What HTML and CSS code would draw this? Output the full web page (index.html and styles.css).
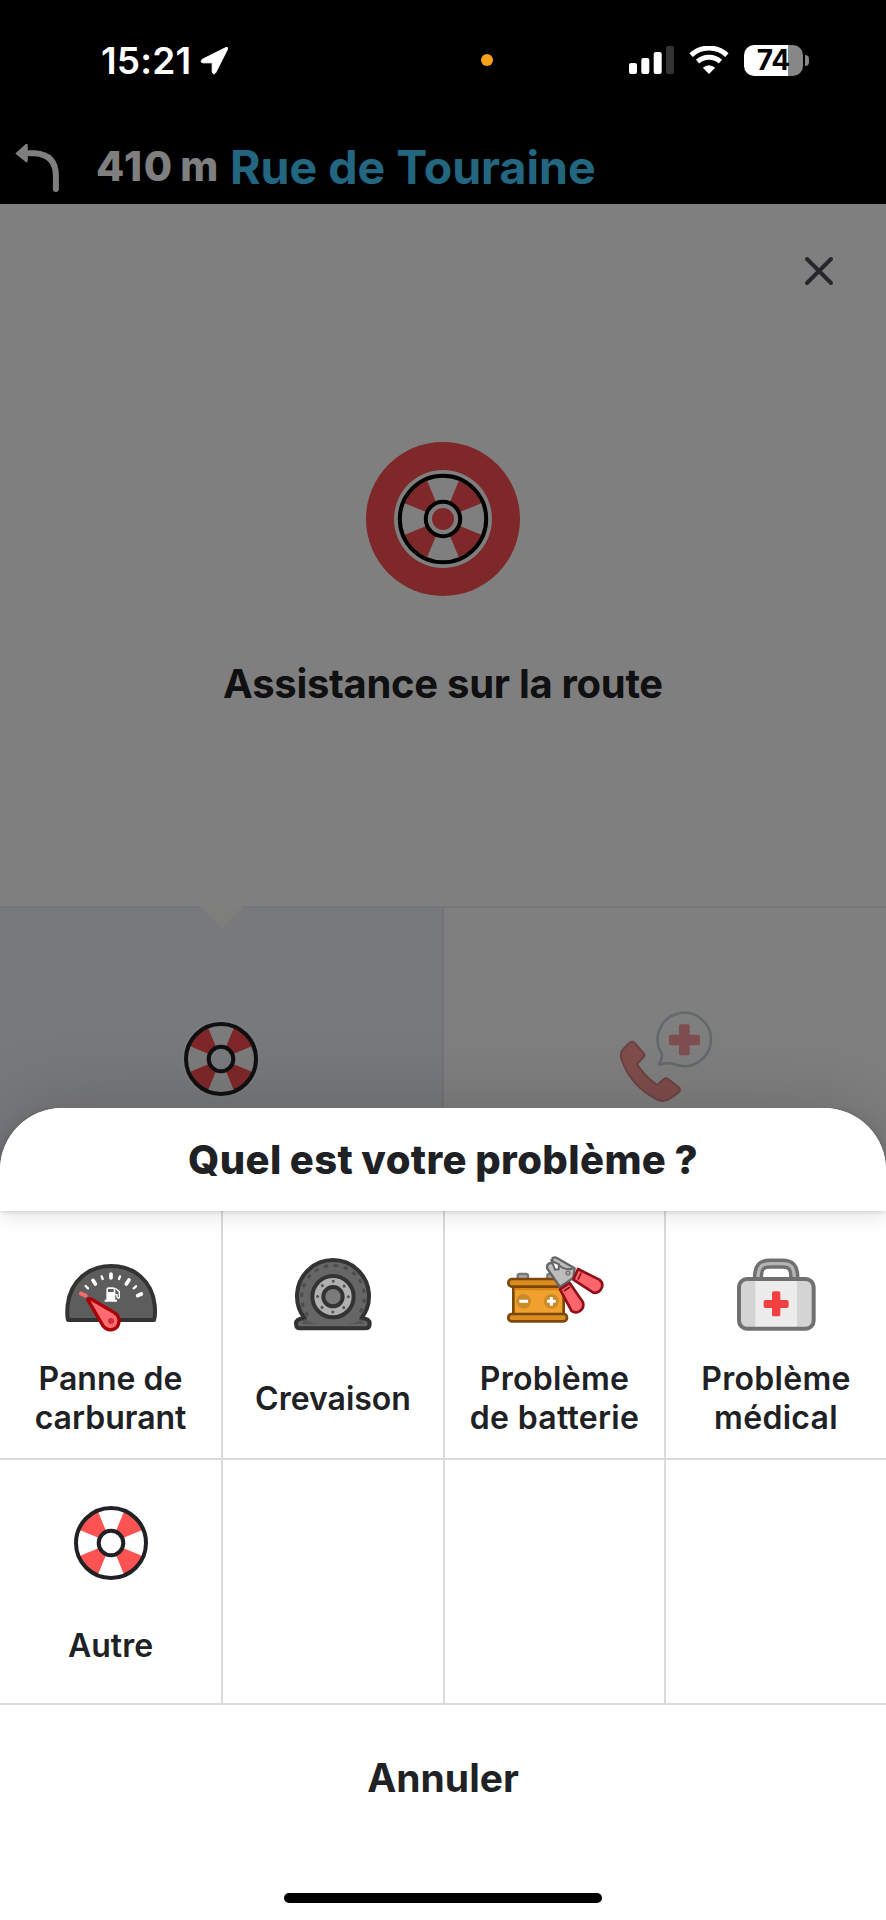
FILE: index.html
```html
<!DOCTYPE html>
<html lang="fr">
<head>
    <meta charset="UTF-8">
    <meta name="viewport" content="width=device-width, initial-scale=1.0">
    <title>Assistance sur la route</title>
    <link rel="stylesheet" href="styles.css">
</head>
<body>
    <div class="screen">
        <div class="navigation">
            <svg class="turn-icon" viewBox="0 0 150 160">
                <path d="M33 34H62Q126 38 126 102V142" fill="none" stroke="#fff" stroke-width="18" stroke-linecap="round"/>
                <path d="M5 33L35 6Q41 3 41 10V56Q41 63 35 60L5 36Q2 34 5 33Z" fill="#fff"/>
            </svg>
            <span class="distance">410 m</span>
            <span class="street">Rue de Touraine</span>
        </div>

        <div class="hero">
            <svg class="close" viewBox="0 0 30 30">
                <path d="M3 3L27 27M27 3L3 27" stroke="#4c4f55" stroke-width="4" stroke-linecap="round"/>
            </svg>
            <svg class="hero-icon" viewBox="0 0 154 154">
                <circle cx="77" cy="77" r="77" fill="#fc5052"/>
                <circle cx="77" cy="77" r="49" fill="#fff"/>
                <circle cx="77" cy="77" r="29.5" fill="none" stroke="#fc5052" stroke-width="24" pathLength="8" stroke-dasharray="1 1" stroke-dashoffset="-0.5"/>
                <circle cx="77" cy="77" r="43.2" fill="none" stroke="#000" stroke-width="4"/>
                <circle cx="77" cy="77" r="17.2" fill="#fff" stroke="#000" stroke-width="4"/>
                <circle cx="77" cy="77" r="11" fill="#fc5052"/>
            </svg>
            <h1>Assistance sur la route</h1>
        </div>

        <div class="tabs">
            <div class="tab active">
                <svg class="tab-arrow" viewBox="0 0 44 24">
                    <path d="M0 0L22 22L44 0Z" fill="#fcfcfa"/>
                </svg>
                <svg class="tab-icon" viewBox="-49 -49 98 95">
                    <circle r="39" fill="#fff" opacity="0.5"/>
                    <circle r="35" fill="#f8f8f8"/>
                    <circle r="23.5" fill="none" stroke="#fc5052" stroke-width="21" pathLength="8" stroke-dasharray="1 1" stroke-dashoffset="-0.5"/>
                    <circle r="35" fill="none" stroke="#202124" stroke-width="4"/>
                    <circle r="12.3" fill="#f2f4f7" stroke="#202124" stroke-width="4"/>
                </svg>
            </div>
            <div class="tab">
                <svg class="tab-icon" viewBox="518 360 294 285">
                    <path d="M656 492A80 80 0 1 1 692 522Q680 517 647 523Q657 506 656 492Z" fill="none" stroke="#c8d2d6" stroke-width="8" stroke-linejoin="round"/>
                    <path d="M712 403h22q5 0 5 5v26h26q5 0 5 5v22q0 5-5 5h-26v25q0 5-5 5h-22q-5 0-5-5v-25h-25q-5 0-5-5v-22q0-5 5-5h25v-26q0-5 5-5Z" fill="#ff9da0"/>
                    <path d="M574 459Q567 452 558 459L537 480Q530 490 534 507Q560 580 620 616Q640 632 660 633Q675 633 706 607Q714 599 706 592L674 567Q668 562 662 567L641 585Q600 555 581 522L600 502Q606 496 601 490Z" fill="#ff9b98" stroke="#da8584" stroke-width="6" stroke-linejoin="round"/>
                </svg>
            </div>
        </div>

        <div class="overlay"></div>

        <div class="status-bar">
            <span class="time">15:21</span>
            <svg class="location" viewBox="0 0 28 29">
                <path d="M26 1.5L2 13.5Q0 16.5 3 16.8H12.2V26Q13.5 29.5 15.8 26.5L27.6 3Q28 .8 26 1.5Z" fill="#fff" stroke="#fff" stroke-linejoin="round"/>
            </svg>
            <span class="mic-dot"></span>
            <svg class="signal" viewBox="0 0 45 28">
                <rect x="0" y="17" width="8" height="11" rx="2" fill="#fff"/>
                <rect x="12.3" y="12" width="8" height="16" rx="2" fill="#fff"/>
                <rect x="24.7" y="6" width="8" height="22" rx="2" fill="#fff"/>
                <rect x="37" y="0" width="8" height="28" rx="2" fill="#333"/>
            </svg>
            <svg class="wifi" viewBox="0 0 120 86">
                <path d="M5 28A80 80 0 0 1 115 28M25 48A52 52 0 0 1 95 48" fill="none" stroke="#fff" stroke-width="15"/>
                <path d="M60 86L41 67Q60 51 79 67Z" fill="#fff"/>
            </svg>
            <div class="battery">74</div>
            <span class="battery-cap"></span>
        </div>

        <div class="sheet">
            <div class="sheet-header">Quel est votre problème ?</div>
            <div class="grid">
                <div class="cell">
                    <svg class="icon" viewBox="-13 -15 390 285">
                        <path d="M53 210Q49 196 52 165C60 94 114 48 183 48S306 94 313 165Q316 196 311 210Z" fill="#5d5d5d" stroke="#333" stroke-width="12" stroke-linejoin="round"/>
                        <g stroke="#fff" stroke-linecap="round">
                            <path d="M182 72V84M135 102L128 91M228 102L236 90M262 137L273 132" stroke-width="11"/>
                            <path d="M154 79L157 87M209 79L206 87M106 108L113 115M257 109L250 115" stroke-width="7"/>
                        </g>
                        <path d="M92 131L106 137" stroke="#ff6b70" stroke-width="12" stroke-linecap="round"/>
                        <path d="M168 149V119Q168 112 175 112H188Q195 112 195 119V149H200V155H163V149Z" fill="#fff"/>
                        <path d="M173 117H190V126H173Z" fill="#5d5d5d"/>
                        <path d="M195 115L207 125V142Q204 148 200 141V134H195" fill="none" stroke="#fff" stroke-width="4"/>
                        <path d="M112 148Q114 144 122 147L192 188C207 198 210 209 204 224C197 242 171 245 159 229Z" fill="#ff6b70" stroke="#a80007" stroke-width="10" stroke-linejoin="round"/>
                        <circle cx="182" cy="213" r="9" fill="#c93038"/>
                    </svg>
                    <span class="label">Panne de<br>carburant</span>
                </div>
                <div class="cell">
                    <svg class="icon" viewBox="-39 0 390 285">
                        <path d="M71 220A108 108 0 1 1 241 220Q266 221 266 236Q266 250 252 250H58Q45 250 45 236Q45 221 71 220Z" fill="#666" stroke="#333" stroke-width="12" stroke-linejoin="round"/>
                        <path d="M71 222Q90 237 120 237H62M241 222Q222 237 192 237H250" fill="#555"/>
                        <path d="M81 212A94 94 0 1 1 231 212" fill="none" stroke="#4d4d4d" stroke-width="9" stroke-dasharray="13 17"/>
                        <circle cx="156" cy="155" r="62" fill="#b0b0b0" stroke="#333" stroke-width="12"/>
                        <circle cx="156" cy="155" r="46" fill="none" stroke="#555" stroke-width="9" stroke-linecap="round" pathLength="80" stroke-dasharray="0.01 9.99"/>
                        <circle cx="156" cy="155" r="29" fill="#7b7b7b" stroke="#333" stroke-width="12"/>
                    </svg>
                    <span class="label">Crevaison</span>
                </div>
                <div class="cell">
                    <svg class="icon" viewBox="-1 0 390 285">
                        <path d="M82 101V93Q82 87 89 87H106Q113 87 113 93V101M171 101V93Q171 87 178 87H192V101" fill="#aaa" stroke="#777" stroke-width="7"/>
                        <path d="M69 123H220V208H69Z" fill="#f0a02c" stroke="#79480a" stroke-width="8"/>
                        <path d="M73 127H216V136H73Z" fill="#d98518"/>
                        <rect x="54" y="102" width="176" height="23" rx="11" fill="#dc8b20" stroke="#79480a" stroke-width="8"/>
                        <rect x="54" y="207" width="176" height="22" rx="10" fill="#dc8b20" stroke="#79480a" stroke-width="8"/>
                        <circle cx="100" cy="169" r="22" fill="#c98a29"/>
                        <circle cx="183" cy="169" r="22" fill="#c98a29"/>
                        <path d="M87 169H113M170 169H196M183 156V182" stroke="#fff" stroke-width="9"/>
                        <path d="M187 39Q194 35 201 40L253 70L249 98L231 111L209 126L171 71Q167 55 184 54Z" fill="#bdbdbd" stroke="#656565" stroke-width="7" stroke-linejoin="round"/>
                        <path d="M184 48L206 58L205 73L194 74Z" fill="#fff" stroke="#656565" stroke-width="6"/>
                        <path d="M207 61Q221 75 247 71" fill="none" stroke="#656565" stroke-width="6"/>
                        <circle cx="233" cy="84" r="6" fill="#aaa" stroke="#777" stroke-width="4"/>
                        <path d="M263 72L327 104Q339 113 335 127Q327 146 309 143L249 104Z" fill="#fc656b" stroke="#90101a" stroke-width="8" stroke-linejoin="round"/>
                        <path d="M209 133L238 114L278 172Q283 190 267 199Q254 206 244 198Z" fill="#fc656b" stroke="#90101a" stroke-width="8" stroke-linejoin="round"/>
                        <path d="M273 83L263 104M221 138L239 126" stroke="#90101a" stroke-width="5"/>
                    </svg>
                    <span class="label wide">Problème<br>de batterie</span>
                </div>
                <div class="cell">
                    <svg class="icon" viewBox="-30 0 390 285">
                        <path d="M111 99C111 65 122 56 148 56H183C209 56 220 65 220 99" fill="none" stroke="#707070" stroke-width="31"/>
                        <path d="M111 99C111 65 122 56 148 56H183C209 56 220 65 220 99" fill="none" stroke="#b5b5b5" stroke-width="10"/>
                        <rect x="54" y="102" width="224" height="149" rx="24" fill="#d4d4d4"/>
                        <path d="M103 102H228V251H103Z" fill="#ececec"/>
                        <rect x="54" y="102" width="224" height="149" rx="24" fill="none" stroke="#707070" stroke-width="12"/>
                        <path d="M158 139h15q5 0 5 5v21h20q5 0 5 5v14q0 5-5 5h-20v20q0 5-5 5h-15q-5 0-5-5v-20h-20q-5 0-5-5v-14q0-5 5-5h20v-21q0-5 5-5Z" fill="#f44040"/>
                    </svg>
                    <span class="label wide">Problème<br>médical</span>
                </div>
                <div class="cell">
                    <svg class="icon" viewBox="-65 -50 130 95">
                        <circle r="23.5" fill="none" stroke="#ff5252" stroke-width="21" pathLength="8" stroke-dasharray="1 1" stroke-dashoffset="-0.5"/>
                        <circle r="35" fill="none" stroke="#202124" stroke-width="4"/>
                        <circle r="12.3" fill="#fff" stroke="#202124" stroke-width="4"/>
                    </svg>
                    <span class="label">Autre</span>
                </div>
                <div class="cell"></div>
                <div class="cell"></div>
                <div class="cell"></div>
            </div>
            <div class="cancel">Annuler</div>
            <div class="home-bar"></div>
        </div>
    </div>
</body>
</html>
```
FILE: styles.css
```css
* {
    box-sizing: border-box;
}
body {
    margin: 0;
    font-family: Inter, "Liberation Sans", sans-serif;
    color: #202124;
}
svg {
    display: block;
    flex-shrink: 0;
}
.screen {
    position: relative;
    width: 886px;
    height: 1920px;
    display: flex;
    flex-direction: column;
    background-color: #fff;
    overflow: hidden;
}
.navigation {
    display: flex;
    height: 204px;
    padding: 139px 0 0 14px;
    background-color: #000;
    color: #fff;
    font-weight: 700;
}
.turn-icon {
    width: 50px;
    height: 53px;
    margin-top: 3px;
}
.distance {
    margin: 3px 0 0 32px;
    width: 134px;
    font-size: 41px;
    line-height: 48px;
    font-weight: 800;
    letter-spacing: 1.6px;
    word-spacing: -4px;
    white-space: nowrap;
}
.street {
    font-size: 46.5px;
    line-height: 56px;
    color: #44ceff;
}
.hero {
    display: flex;
    flex-direction: column;
    align-items: center;
    height: 702px;
    padding-top: 52px;
}
.close {
    align-self: flex-end;
    width: 30px;
    height: 30px;
    margin-right: 52px;
}
.hero-icon {
    width: 154px;
    height: 154px;
    margin-top: 156px;
}
h1 {
    margin: 63px 0 0;
    font-size: 40px;
    line-height: 50px;
    font-weight: 700;
    letter-spacing: -0.3px;
}
.tabs {
    display: flex;
    flex: 1;
    border-top: 2px solid #ebedf0;
}
.tab {
    position: relative;
    flex: 1;
    display: flex;
    justify-content: center;
    align-items: flex-start;
    padding-top: 102px;
}
.tab.active {
    background-color: #f0f3f6;
    border-right: 2px solid #e6e9ee;
}
.tab-arrow {
    position: absolute;
    top: -2px;
    left: 200px;
    width: 44px;
    height: 24px;
}
.tab-icon {
    width: 98px;
    height: 95px;
}
.overlay {
    position: absolute;
    inset: 0;
    background-color: rgba(0, 0, 0, 0.5);
}

/* Status bar stays bright above the overlay */
.status-bar {
    position: absolute;
    top: 0;
    left: 0;
    width: 886px;
    height: 120px;
    padding: 0 77px 0 101px;
    display: flex;
    align-items: center;
    color: #fff;
}
.time {
    width: 99px;
    font-size: 37px;
    font-weight: 600;
    letter-spacing: 0.2px;
}
.location {
    width: 28px;
    height: 29px;
}
.mic-dot {
    width: 12px;
    height: 12px;
    margin-left: 253px;
    border-radius: 50%;
    background-color: #f9a11b;
}
.signal {
    width: 45px;
    height: 28px;
    margin-left: auto;
}
.wifi {
    width: 40px;
    height: 28px;
    margin-left: 15px;
}
.battery {
    width: 59px;
    height: 31px;
    margin-left: 15px;
    border-radius: 10px;
    background: linear-gradient(to right, #fff 44px, #878787 44px);
    color: #000;
    font-size: 28px;
    line-height: 31px;
    font-weight: 700;
    text-align: center;
}
.battery-cap {
    width: 4px;
    height: 11px;
    margin-left: 2px;
    border-radius: 0 4px 4px 0;
    background-color: #878787;
}

/* Bottom sheet */
.sheet {
    position: absolute;
    left: 0;
    right: 0;
    bottom: 0;
    height: 812px;
    display: flex;
    flex-direction: column;
    background-color: #fff;
    border-radius: 62px 62px 0 0;
    box-shadow: 0 0 80px rgba(0, 0, 0, 0.18);
}
.sheet-header {
    position: relative;
    z-index: 1;
    height: 103px;
    line-height: 103px;
    text-align: center;
    font-size: 40px;
    font-weight: 800;
    letter-spacing: 0.4px;
    word-spacing: -1px;
    background-color: #fff;
    border-radius: 62px 62px 0 0;
    box-shadow: 0 1px 4px rgba(0, 0, 0, 0.14), 0 6px 20px rgba(0, 0, 0, 0.1);
    clip-path: inset(0 0 -40px 0);
}
.grid {
    display: grid;
    grid-template-columns: 223px 222px 221px 220px;
    grid-template-rows: 249px 245px;
}
.cell {
    display: flex;
    flex-direction: column;
    align-items: center;
    padding-top: 34px;
    border-right: 2px solid #d9dadd;
    border-bottom: 2px solid #d9dadd;
}
.cell:nth-child(4n) {
    border-right: none;
}
.cell:nth-child(n+5) {
    padding-top: 33px;
}
.icon {
    width: 130px;
    height: 95px;
}
.label {
    display: flex;
    align-items: center;
    height: 78px;
    margin-top: 19px;
    font-size: 32px;
    line-height: 39px;
    font-weight: 600;
    text-align: center;
}
.label.wide {
    letter-spacing: 0.3px;
}
.cell:nth-child(n+5) .label {
    margin-top: 18px;
}
.cancel {
    height: 146px;
    line-height: 146px;
    text-align: center;
    font-size: 39px;
    font-weight: 700;
}
.home-bar {
    width: 318px;
    height: 10px;
    margin: 42px auto 0;
    border-radius: 5px;
    background-color: #000;
}
```
